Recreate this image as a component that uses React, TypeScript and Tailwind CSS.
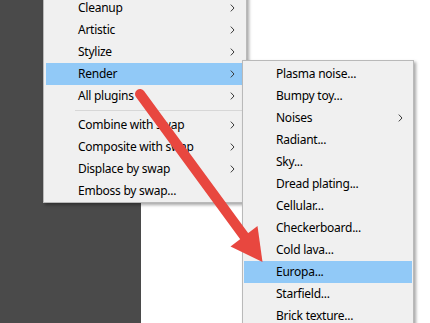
import React from "react";

const font = { fontFamily: '"Noto Sans", "Segoe UI", sans-serif' };

const Chevron = () => (
  <svg width="5" height="8" viewBox="0 0 5 8" className="shrink-0">
    <path d="M0.8 0.6 L4 4 L0.8 7.4" stroke="#3a3a3a" strokeWidth="1" fill="none" />
  </svg>
);

type Item = { label: string; sub?: boolean; active?: boolean } | "sep";

const Row = ({ item }: { item: Exclude<Item, "sep"> }) => (
  <div
    className={
      "flex h-[22px] items-center justify-between pl-[32px] pr-[9px] text-[12px] tracking-[-0.25px] text-black " +
      (item.active ? "bg-[#91c9f7]" : "")
    }
  >
    <span className="leading-[22px] whitespace-nowrap">{item.label}</span>
    {item.sub ? <Chevron /> : null}
  </div>
);

const Menu = ({ items, className }: { items: Item[]; className: string }) => (
  <div
    className={
      "absolute border border-[#b9b9b9] bg-[#f0f0f0] shadow-[2px_2px_3px_rgba(0,0,0,0.35)] " + className
    }
    style={font}
  >
    {items.map((it, i) =>
      it === "sep" ? (
        <div key={i} className="flex h-[7px] items-center pl-[29px]">
          <div className="h-px w-full bg-[#d7d7d7]" />
        </div>
      ) : (
        <Row key={i} item={it} />
      )
    )}
  </div>
);

const menu1: Item[] = [
  { label: "Cleanup", sub: true },
  { label: "Artistic", sub: true },
  { label: "Stylize", sub: true },
  { label: "Render", sub: true, active: true },
  { label: "All plugins", sub: true },
  "sep",
  { label: "Combine with swap", sub: true },
  { label: "Composite with swap", sub: true },
  { label: "Displace by swap", sub: true },
  { label: "Emboss by swap..." },
];

const menu2: Item[] = [
  { label: "Plasma noise..." },
  { label: "Bumpy toy..." },
  { label: "Noises", sub: true },
  { label: "Radiant..." },
  { label: "Sky..." },
  { label: "Dread plating..." },
  { label: "Cellular..." },
  { label: "Checkerboard..." },
  { label: "Cold lava..." },
  { label: "Europa...", active: true },
  { label: "Starfield..." },
  { label: "Brick texture..." },
];

export default function App() {
  return (
    <div className="relative h-[323px] w-[430px] overflow-hidden">
      <div className="flex h-full w-full">
        <div className="h-full w-[141px] bg-[#4a4a4a]" />
        <div className="h-full flex-1 bg-white" />
      </div>

      <Menu items={menu1} className="left-[43px] top-[-6px] w-[204px] px-[2px] pt-[2px] pb-[0px]" />
      <Menu items={menu2} className="left-[242px] top-[60px] w-[172px] px-[1px] pt-[2px] pb-[2px]" />

      <svg
        className="pointer-events-none absolute left-0 top-0"
        width="430"
        height="323"
        viewBox="0 0 430 323"
      >
        <line x1="140" y1="94" x2="247" y2="240" stroke="#e8473f" strokeWidth="10" strokeLinecap="round" />
        <polygon points="230.5,246.5 257.5,226 262.5,262" fill="#e8473f" />
      </svg>
    </div>
  );
}
